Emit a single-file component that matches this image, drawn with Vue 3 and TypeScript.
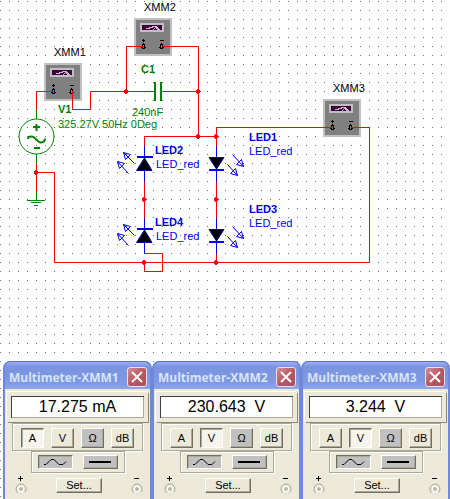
<script setup lang="ts">
interface Meter {
  name: string
  x: number
  y: number
  reading: string
  mode: string
}

const meters: Meter[] = [
  { name: 'XMM1', x: 44, y: 63, reading: '17.275 mA', mode: 'A' },
  { name: 'XMM2', x: 134, y: 18, reading: '230.643\u00a0 V', mode: 'V' },
  { name: 'XMM3', x: 323, y: 99, reading: '3.244\u00a0 V', mode: 'V' },
]

const modes = ['A', 'V', 'Ω', 'dB']

const leds = [
  { name: 'LED2', x: 144, y: 146, up: true },
  { name: 'LED4', x: 144, y: 218, up: true },
  { name: 'LED1', x: 216, y: 146, up: false },
  { name: 'LED3', x: 216, y: 218, up: false },
]

const nodes: [number, number][] = [
  [126, 91], [198, 91], [198, 136], [216, 136], [144, 199],
  [216, 199], [144, 262], [216, 262], [36, 172],
]
</script>

<template>
  <main class="workspace">
    <svg class="circuit" width="450" height="361" viewBox="0 0 450 361" role="img" aria-label="Circuit schematic">
      <g v-for="m in meters" :key="m.name" :transform="`translate(${m.x} ${m.y})`">
        <text class="label black" x="10" y="-7">{{ m.name }}</text>
        <rect width="38" height="38" fill="#c0c0c0" />
        <rect x="2" y="2" width="34" height="34" fill="#808080" />
        <rect x="6" y="5" width="24" height="9" fill="#c0c0c0" />
        <rect x="8" y="7" width="20" height="5" fill="#400040" />
        <path d="M12 10h3v-1h3v-1h3v1h-2v1h-3v1h-4zM21 8h2v1h1v1h1v1h1v1h-3v-1h-1v-1h-1zM19 11h1v-1h1v1h-1v1h-1z" fill="#c8b8c8" />
        <path d="M8 22.500h3M9.500 21v3M26 22.500h4" class="ink" />
        <path d="M8 26.500h3M26 26.500h3M8.500 27v4M10.500 27v4M26.500 27v4M28.500 27v4M9 25.500h1M27 25.500h1M9 30.500h1M27 30.500h1M7 29.500h1M11 29.500h1M25 29.500h1M29 29.500h1" class="ink" />
      </g>

      <g class="wire">
        <path d="M54 91.500H36.500V110" />
        <path d="M72.500 91V109.500H90.500V91.500H145" />
        <path d="M144 46.500H126.500V91" />
        <path d="M162 46.500H198.500V136" />
        <path d="M171 91.500H198" />
        <path d="M144.500 146V136.500H216M216.500 146V127.500H333" />
        <path d="M351 127.500H369.500V262.500H54.500V172.500H36" />
        <path d="M36.500 164V192" />
        <path d="M144.500 182V218M216.500 182V218M216.500 254V262" />
        <path d="M144.500 253.500H162.500V271.500H144.500V262" />
      </g>

      <g class="part">
        <path d="M145 91.500H154M162 91.500H171" />
        <path d="M155 82V101M161 82V101" class="thick" />
        <path d="M36.500 110V119M36.500 154V164M36.500 192V200M27 200.500H45M31 202.500H41M34 205.500H38" />
        <circle cx="36.500" cy="136.500" r="17.500" />
        <path d="M33 127H40M36.500 124V131M34 148H40" class="thick" />
        <path d="M28 139q0-3 4-2.500c3 0 5 6 9 6q4-.5 4-4" class="thick" />
      </g>

      <g v-for="d in leds" :key="d.name" :transform="`translate(${d.x} ${d.y})`">
        <path d="M.5 0V36" class="led" />
        <template v-if="d.up">
          <path d="M.5 12L8 24.500H-7.500Z" class="diode" />
          <path d="M-7 11H9" class="bar" />
          <path d="M-9.500 17.500L-20.500 6.500M-15.500 27.500L-26.500 15.500M-20.500 6.500l7 2-5 5zM-26.500 15.500l7 2-5 5z" class="led" />
          <text class="name blue" x="11" y="8">{{ d.name }}</text>
          <text class="label blue" x="12" y="22">LED_red</text>
        </template>
        <template v-else>
          <path d="M.5 23L8 11.500H-7Z" class="diode" />
          <path d="M-7 24H8" class="bar" />
          <path d="M16.500 8.500L27.500 20.500M11.500 18.500L21.500 29.500M27.500 20.500l-7-2 5-5zM21.500 29.500l-7-2 5-5z" class="led" />
          <text class="name blue" x="33" y="-5">{{ d.name }}</text>
          <text class="label blue" x="33" y="9">LED_red</text>
        </template>
      </g>

      <path
        v-for="(n, i) in nodes"
        :key="i"
        :transform="`translate(${n[0]} ${n[1]})`"
        d="M-1-2H1V-1H2V0H3V1H2V2H1V3H-1V2H-2V-1H-1z"
        fill="#f00"
      />

      <text class="name green" x="58" y="113">V1</text>
      <text class="label green" x="58" y="128">325.27V 50Hz 0Deg</text>
      <text class="name green" x="141" y="73">C1</text>
      <text class="label green" x="132" y="116">240nF</text>
    </svg>

    <div class="meters">
      <section v-for="m in meters" :key="m.name" class="window">
        <header class="titlebar">
          <h2>Multimeter-{{ m.name }}</h2>
          <button type="button" class="close" aria-label="Close">
            <svg width="12" height="12" viewBox="0 0 12 12" aria-hidden="true"><path d="M1 1l10 10M11 1L1 11" /></svg>
          </button>
        </header>
        <div class="body">
          <output class="display">{{ m.reading }}</output>
          <div class="modes">
            <button
              v-for="k in modes"
              :key="k"
              type="button"
              :class="{ pressed: k === m.mode, gray: k === 'Ω' }"
              :aria-pressed="k === m.mode"
            >{{ k }}</button>
          </div>
          <div class="signals">
            <button type="button" class="gray sunk" aria-label="AC" aria-pressed="true">
              <svg width="24" height="10" viewBox="0 0 24 10" aria-hidden="true"><path d="M1 7.500h2l5-5h3l5 5h4l3-3" /></svg>
            </button>
            <button type="button" class="gray" aria-label="DC" aria-pressed="false">
              <svg width="24" height="10" viewBox="0 0 24 10" aria-hidden="true"><path d="M1 5h22" class="dc" /></svg>
            </button>
          </div>
          <div class="terminals">
            <svg v-for="s in 2" :key="s" :class="{ last: s === 2 }" width="12" height="20" viewBox="0 0 12 20" aria-hidden="true">
              <path :d="s === 1 ? 'M3 3.500h5M5.500 1v5' : 'M3 3.500h5'" stroke="#000" />
              <circle cx="6" cy="14" r="5" fill="none" stroke="#aca899" />
              <path d="M9.500 17.500A5 5 0 0 1 3 18" fill="none" stroke="#fff" />
              <circle cx="6" cy="14" r="3" fill="#fff" />
              <circle cx="6" cy="14" r="2" fill="#b8b5a8" />
            </svg>
            <button type="button" class="set">Set...</button>
          </div>
        </div>
      </section>
    </div>
  </main>
</template>

<style>
body {
  margin: 0;
  background: #fff;
}
</style>

<style scoped>
.workspace {
  font-family: "Liberation Sans", Arial, sans-serif;
  background-image: conic-gradient(from 0deg at 1px 1px, transparent 0 270deg, #707070 270deg 360deg);
  background-size: 9px 9px;
  background-position: 0 1px;
  overflow: hidden;
}
.circuit {
  display: block;
}
.label {
  font-size: 11px;
}
.name {
  font-size: 11px;
  font-weight: bold;
}
.black { fill: #000; }
.blue { fill: #0000f0; }
.green { fill: #008000; }
.wire path {
  fill: none;
  stroke: #f00;
}
.part path,
.part circle {
  fill: none;
  stroke: #008000;
}
.part .thick {
  stroke-width: 2;
}
.ink {
  fill: none;
  stroke: #000;
}
.led {
  fill: none;
  stroke: #0000f0;
}
.diode {
  fill: #000;
  stroke: #0000a0;
}
.bar {
  stroke: #0000ff;
  stroke-width: 2;
}
.meters {
  display: grid;
  grid-template-columns: repeat(3, minmax(0, 1fr));
  padding-left: 3px;
}
.window {
  box-sizing: border-box;
  border: solid #7088dc;
  border-width: 0 2px 2px;
  border-radius: 7px 7px 0 0;
  background: #7088dc;
}
.titlebar {
  display: flex;
  align-items: center;
  justify-content: space-between;
  box-sizing: border-box;
  height: 28px;
  padding: 3px 3px 0 4px;
  border-top: 1px solid #5d70c0;
  border-radius: 6px 6px 0 0;
  background: linear-gradient(#98b0f0, #7b94e0 5px, #7e98e4 20px, #8aa4ec);
}
h2 {
  margin: 0;
  color: #d8e4f8;
  font: bold 12px "Open Sans", "Noto Sans", sans-serif;
  white-space: nowrap;
}
button {
  display: flex;
  align-items: center;
  justify-content: center;
  box-sizing: border-box;
  padding: 0;
  border: 1px solid;
  border-color: #fff #716f64 #716f64 #fff;
  background: #ece9d8;
  box-shadow: inset -1px -1px #aca899;
  color: #000;
  font: 11px "Liberation Sans", Arial, sans-serif;
}
button svg path {
  fill: none;
  stroke: #000;
}
.close {
  flex: none;
  width: 20px;
  height: 20px;
  border: 1px solid #e8e0f0;
  border-radius: 3px;
  background: linear-gradient(135deg, #d09098, #b85860 50%, #a85060);
  box-shadow: none;
}
.close svg path {
  stroke: #fff;
  stroke-width: 2;
}
.body {
  display: flex;
  flex-direction: column;
  align-items: center;
  padding: 3px 2px 4px;
  background: #ece9d8;
}
.display {
  box-sizing: border-box;
  width: 100%;
  height: 30px;
  margin-bottom: 1px;
  border: 4px solid #ece9d8;
  background: #fff;
  box-shadow: inset 1px 1px #404040, inset -1px -1px #aca899, -1px -1px #fff, 1px 1px #8c897c;
  font-size: 16px;
  line-height: 22px;
  text-align: center;
}
.modes,
.signals {
  display: flex;
  border: 1px solid #aca899;
  box-shadow: inset 1px 1px #fff, 1px 1px #fff;
}
.modes {
  gap: 7px;
  padding: 4px 8px 2px;
}
.modes button {
  width: 23px;
  height: 20px;
}
.signals {
  gap: 10px;
  padding: 3px 6px;
}
.signals button {
  width: 35px;
  height: 14px;
}
button.gray {
  background: #c0c0c0;
}
button.pressed,
button.sunk {
  border-color: #716f64 #fff #fff #716f64;
  box-shadow: inset 1px 1px #aca899;
}
button.pressed {
  background: #f6f4ec;
}
button svg .dc {
  stroke-width: 2;
}
.terminals {
  display: flex;
  align-items: center;
  justify-content: space-between;
  align-self: stretch;
  padding: 2px 5px 0 8px;
}
.terminals .last {
  order: 3;
}
.set {
  width: 46px;
  height: 15px;
}
</style>
